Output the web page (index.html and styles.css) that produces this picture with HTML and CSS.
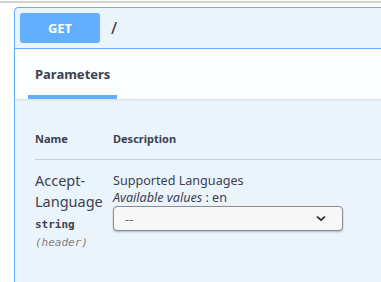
FILE: index.html
```html
<!DOCTYPE html>
<html lang="en">
  <head>
    <meta charset="UTF-8" />
    <title>Swagger operation</title>
    <link rel="stylesheet" href="styles.css">
  </head>
  <body>
    <div class="topline"></div>
    <div class="opblock">
      <div class="summary">
        <span class="method">GET</span>
        <span class="path">/</span>
      </div>
      <div class="section-header">
        <h4 class="tab"><span>Parameters</span></h4>
      </div>
      <div class="params">
        <div class="params-head">
          <div class="col-name">Name</div>
          <div class="col-desc">Description</div>
        </div>
        <div class="param-row">
          <div class="col-name">
            <div class="param-name">Accept-Language</div>
            <div class="param-type">string</div>
            <div class="param-in">(header)</div>
          </div>
          <div class="col-desc">
            <div class="desc-text">Supported Languages</div>
            <div class="desc-enum"><i>Available values</i> : en</div>
            <div class="select">
              <span>--</span>
              <svg width="10" height="7" viewBox="0 0 10 7">
                <path d="M1 1.5 L5 5.2 L9 1.5" fill="none" stroke="#222" stroke-width="1.7" />
              </svg>
            </div>
          </div>
        </div>
      </div>
    </div>
  </body>
</html>
```

FILE: styles.css
```css
body {
  margin: 0;
  font-family: "Noto Sans", sans-serif;
  color: #3b4151;
  background: #fff;
  overflow: hidden;
  width: 381px;
  height: 282px;
}
.topline {
  margin-top: 1px;
  height: 2px;
  background: #d2d2d2;
}
.opblock {
  margin: 4px 0 0 14px;
  width: 420px;
  height: 300px;
  border: 1px solid #61affe;
  border-radius: 4px;
  background: #ebf3fb;
}
.summary {
  display: flex;
  align-items: center;
  padding: 5px;
  border-bottom: 1px solid #61affe;
}
.method {
  width: 80px;
  height: 30px;
  line-height: 30px;
  text-align: center;
  background: #61affe;
  color: #fff;
  font-weight: bold;
  font-size: 13px;
  border-radius: 3px;
}
.path {
  margin-left: 11px;
  font-size: 16px;
  font-weight: 500;
  color: #3b4151;
}
.section-header {
  display: flex;
  align-items: center;
  min-height: 50px;
  padding: 0 20px;
  box-sizing: border-box;
  background: rgba(255, 255, 255, 0.8);
  box-shadow: 0 1px 2px rgba(0, 0, 0, 0.1);
}
.tab {
  margin: 0;
  font-size: 13px;
  font-weight: bold;
}
.tab span {
  position: relative;
}
.tab span::after {
  content: "";
  position: absolute;
  left: -7px;
  right: -7px;
  bottom: -16px;
  height: 4px;
  background: #61affe;
}
.params {
  padding: 20px;
}
.params-head {
  display: flex;
  padding: 12px 0;
  font-size: 11px;
  font-weight: bold;
  line-height: 16px;
  border-bottom: 1px solid rgba(59, 65, 81, 0.2);
}
.col-name {
  width: 78px;
  flex: none;
}
.col-desc {
  flex: 1;
}
.param-row {
  display: flex;
  padding-top: 10px;
}
.param-row .col-desc {
  padding-top: 2px;
}
.param-name {
  font-size: 14.5px;
  line-height: 21px;
}
.param-type {
  font-family: "DejaVu Sans Mono", monospace;
  font-size: 11px;
  font-weight: bold;
  padding: 6px 0 5px;
}
.param-in {
  font-family: "DejaVu Sans Mono", monospace;
  font-size: 11px;
  font-style: italic;
  color: #808080;
}
.desc-text,
.desc-enum {
  font-size: 12.6px;
  line-height: 17px;
}
.select {
  display: flex;
  align-items: center;
  justify-content: space-between;
  width: 230px;
  height: 25px;
  box-sizing: border-box;
  padding: 0 16px 0 11px;
  border: 1px solid #8a8c93;
  border-radius: 4px;
  background: #f7f7f7;
  box-shadow: 0 1px 2px rgba(0, 0, 0, 0.25);
  font-size: 13px;
  color: #666;
}
```
